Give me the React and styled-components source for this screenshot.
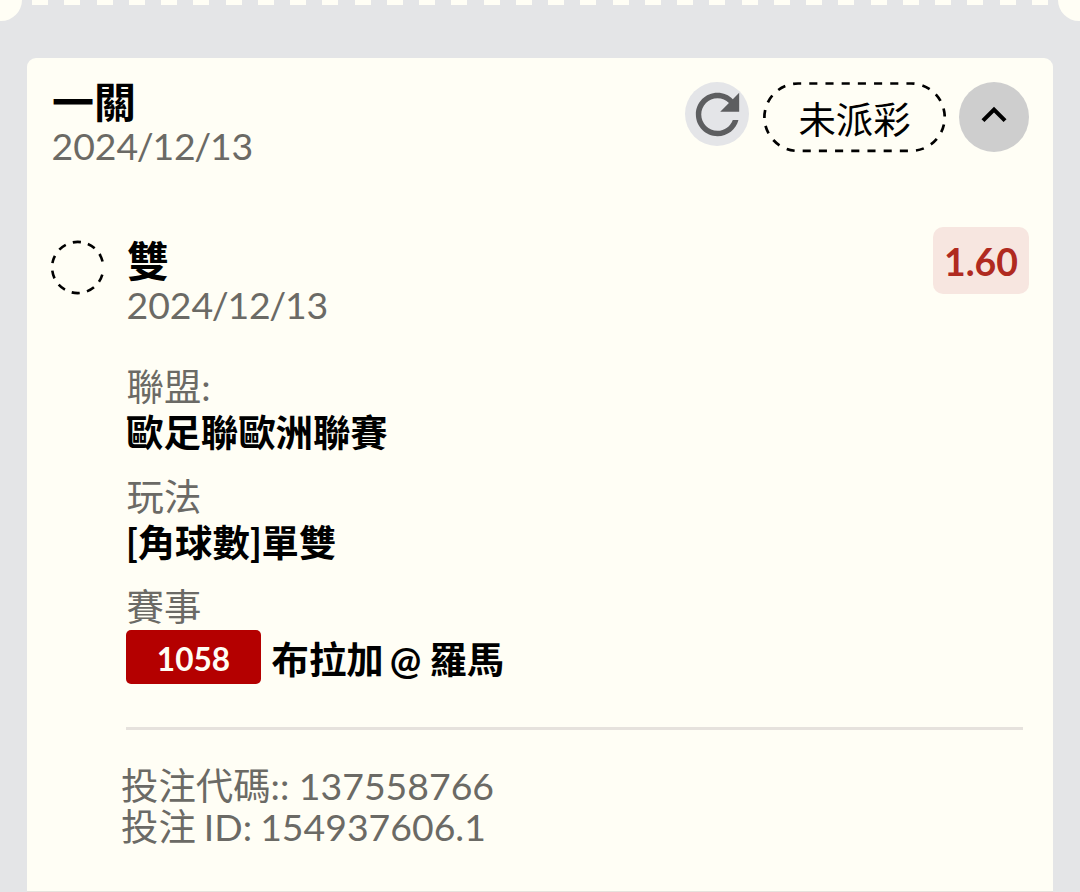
import React from 'react';
import styled, { createGlobalStyle } from 'styled-components';

const colors = {
  page: '#e4e5e7',
  card: '#fffef5',
  text: '#000000',
  muted: '#6b6a65',
  line: '#e6e2dd',
  red: '#b40000',
};

const GlobalStyle = createGlobalStyle`
  * {
    box-sizing: border-box;
  }

  body {
    margin: 0;
    background-color: ${colors.page};
    font-family: Lato, 'Noto Sans CJK TC', sans-serif;
    font-size: 37.4px;
    overflow: hidden;
  }
`;

const Page = styled.div`
  height: 892px;
  display: flex;
  flex-direction: column;
  overflow: hidden;
`;

const TicketEdge = styled.div`
  flex: none;
  height: 58px;
  display: flex;
  align-items: flex-start;
`;

const Notch = styled.div`
  width: 22px;
  height: 21px;
  background-color: ${colors.card};
  border-radius: ${(props) => (props.$right ? '0 0 0 22px' : '0 0 22px 0')};
`;

const Perforation = styled.div`
  flex: 1;
  display: flex;
  justify-content: space-between;
  padding: 0 10px;
`;

const Dash = styled.span`
  width: 16px;
  height: 4.5px;
  background-color: ${colors.card};
`;

const Card = styled.main`
  flex: 1;
  margin: 0 27px;
  padding: 21px 24px 0 25px;
  background-color: ${colors.card};
  border-radius: 9px 9px 0 0;
  border-bottom: 1px solid ${colors.line};
  white-space: nowrap;
`;

const Header = styled.header`
  height: 159px;
  display: flex;
  justify-content: space-between;
`;

const Title = styled.div`
  font-size: 42px;
  font-weight: 700;
  line-height: 47px;
  color: ${colors.text};
`;

const DateLine = styled.div`
  margin-left: -0.5px;
  line-height: 40px;
  color: ${colors.muted};
`;

const Slash = styled.span`
  margin: 0 -1.4px;
`;

const Actions = styled.div`
  display: flex;
  align-items: flex-start;
  padding-top: 3px;
`;

const RoundButton = styled.button`
  width: ${(props) => props.$size}px;
  height: ${(props) => props.$size}px;
  display: flex;
  align-items: center;
  justify-content: center;
  padding: ${(props) => (props.$lift ? '0 0 4px' : '0')};
  border: none;
  border-radius: 50%;
  background-color: ${(props) => props.$bg};

  svg {
    flex: none;
  }
`;

const Status = styled.div`
  position: relative;
  width: 183px;
  height: 71px;
  margin: 0 13px 0 14px;
  text-align: center;
  line-height: 75px;
  color: ${colors.text};
`;

const Outline = styled.svg`
  position: absolute;
  top: 0;
  left: 0;
  fill: none;
  stroke: ${colors.text};
  stroke-width: 2.7;
`;

const Selection = styled.section`
  display: flex;
  align-items: flex-start;
`;

const Marker = styled.svg`
  flex: none;
  width: 54px;
  height: 54px;
  margin: 2px 21px 0 0;
  overflow: visible;
  fill: none;
  stroke: ${colors.text};
  stroke-width: 2.6;
`;

const Details = styled.div`
  flex: 1;
`;

const Odds = styled.div`
  width: 96px;
  height: 67px;
  margin-top: -11px;
  border-radius: 10px;
  background-color: #f7e6e0;
  color: #b02a20;
  font-weight: 700;
  line-height: 70px;
  text-align: center;
`;

const Fields = styled.dl`
  display: flex;
  flex-direction: column;
  gap: 18px;
  margin: 39px 0 0 -1px;
`;

const Label = styled.dt`
  padding-left: 0.5px;
  line-height: 46px;
  color: ${colors.muted};
`;

const Value = styled.dd`
  margin: 0;
  line-height: 46px;
  font-weight: 700;
  color: ${colors.text};
`;

const Match = styled(Value)`
  display: flex;
  align-items: flex-start;
  gap: 10.5px;
  line-height: 60px;
`;

const MatchCode = styled.span`
  width: 135px;
  height: 54px;
  border-radius: 5px;
  background-color: ${colors.red};
  color: ${colors.card};
  font-size: 31.6px;
  line-height: 58px;
  text-align: center;
`;

const Teams = styled.span`
  word-spacing: -2px;
`;

const At = styled.span`
  margin: 0 1px 0 -1px;
`;

const Footer = styled.footer`
  margin: 37px 6px 0 74px;
  padding-top: 36px;
  border-top: 3px solid ${colors.line};
  color: ${colors.muted};
  line-height: 40.5px;
`;

const BetInfo = styled.div`
  margin-left: -5px;
  word-spacing: ${(props) => (props.$tight ? '-1.5px' : 'normal')};
`;

// ten short arcs, the widest gap faces right
const markerDashes = Array(9).fill('18 16.7').concat('18 29.7').join(' ');

const RefreshIcon = () => (
  <svg width="65" height="65" viewBox="0 0 24 24" fill="#5d5e60">
    <path d="M17.65 6.35C16.2 4.9 14.21 4 12 4c-4.42 0-7.99 3.58-7.99 8s3.57 8 7.99 8c3.73 0 6.84-2.55 7.73-6h-2.08c-.82 2.33-3.04 4-5.65 4-3.31 0-6-2.69-6-6s2.69-6 6-6c1.66 0 3.14.69 4.22 1.78L13 11h7V4l-2.35 2.35z" />
  </svg>
);

const ChevronIcon = () => (
  <svg width="50" height="50" viewBox="0 0 24 24" fill="#000">
    <path d="M7.41 15.41L12 10.83l4.59 4.58L18 14l-6-6-6 6z" />
  </svg>
);

const DateText = ({ year, month, day }) => (
  <DateLine>
    {year}
    <Slash>/</Slash>
    {month}
    <Slash>/</Slash>
    {day}
  </DateLine>
);

const App = () => {
  return (
    <>
      <GlobalStyle />
      <Page>
        <TicketEdge>
          <Notch />
          <Perforation>
            {Array.from({ length: 32 }, (_, i) => (
              <Dash key={i} />
            ))}
          </Perforation>
          <Notch $right />
        </TicketEdge>
        <Card>
          <Header>
            <div>
              <Title>一關</Title>
              <DateText year="2024" month="12" day="13" />
            </div>
            <Actions>
              <RoundButton $size={64} $bg="#e4e5e8" aria-label="refresh">
                <RefreshIcon />
              </RoundButton>
              <Status>
                <Outline width="183" height="71">
                  <rect
                    x="1.4"
                    y="1.5"
                    width="180.3"
                    height="67.4"
                    rx="33.7"
                    pathLength="27"
                    strokeDasharray="0.5 0.5"
                    strokeDashoffset="0.31"
                  />
                </Outline>
                未派彩
              </Status>
              <RoundButton $size={70} $bg="#cecece" $lift aria-label="collapse">
                <ChevronIcon />
              </RoundButton>
            </Actions>
          </Header>
          <Selection>
            <Marker viewBox="0 0 54 54">
              <circle
                cx="25.7"
                cy="27.5"
                r="25.6"
                pathLength="360"
                strokeDasharray={markerDashes}
                transform="rotate(16 25.7 27.5)"
              />
            </Marker>
            <Details>
              <Title>雙</Title>
              <DateText year="2024" month="12" day="13" />
              <Fields>
                <div>
                  <Label>聯盟:</Label>
                  <Value>歐足聯歐洲聯賽</Value>
                </div>
                <div>
                  <Label>玩法</Label>
                  <Value>[角球數]單雙</Value>
                </div>
                <div>
                  <Label>賽事</Label>
                  <Match>
                    <MatchCode>1058</MatchCode>
                    <Teams>
                      布拉加 <At>@</At> 羅馬
                    </Teams>
                  </Match>
                </div>
              </Fields>
            </Details>
            <Odds>1.60</Odds>
          </Selection>
          <Footer>
            <BetInfo>投注代碼:: 137558766</BetInfo>
            <BetInfo $tight>投注 ID: 154937606.1</BetInfo>
          </Footer>
        </Card>
      </Page>
    </>
  );
};

export default App;
